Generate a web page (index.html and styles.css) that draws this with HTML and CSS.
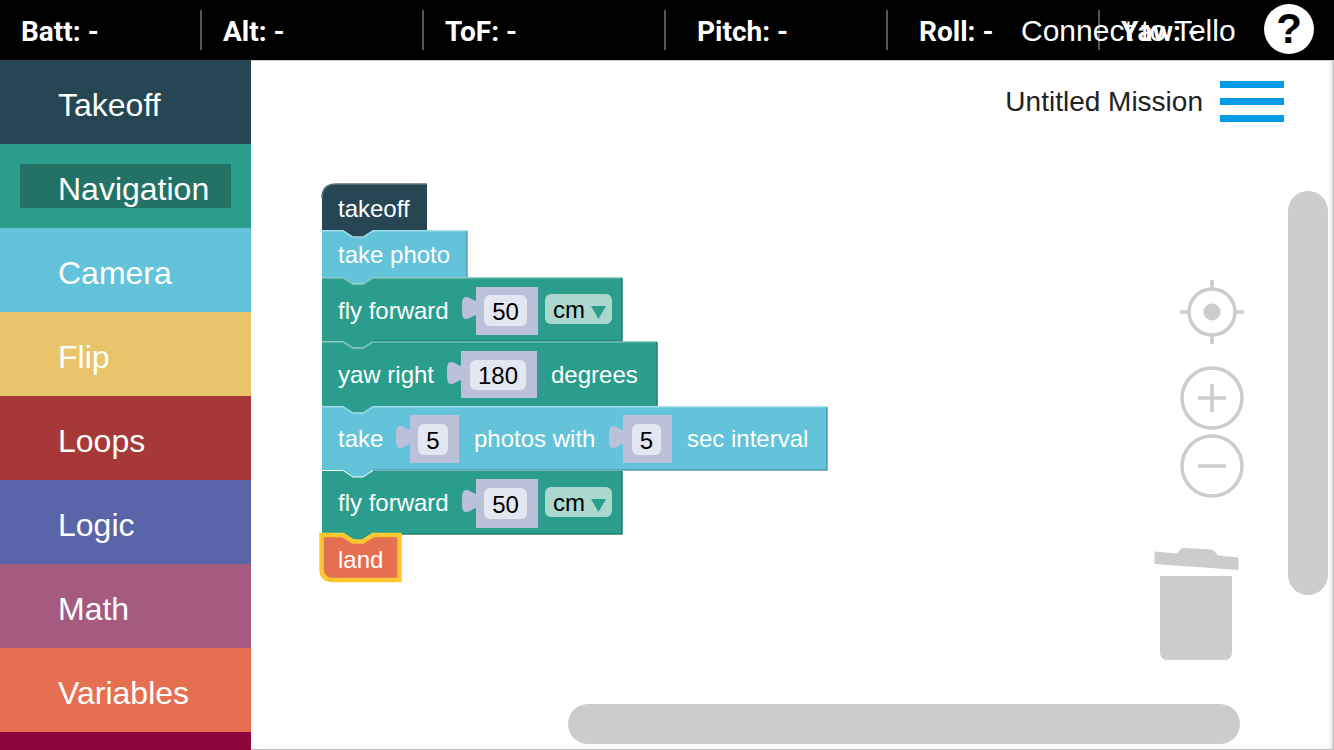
FILE: index.html
```html
<!DOCTYPE html>
<html lang="en">
<head>
    <meta charset="UTF-8">
    <meta name="viewport" content="width=device-width, initial-scale=1.0">
    <title>Untitled Mission</title>
    <link rel="stylesheet" href="styles.css">
</head>
<body>
    <header class="topbar">
        <div class="stat stat-batt">Batt: -</div>
        <div class="stat stat-alt">Alt: -</div>
        <div class="stat stat-tof">ToF: -</div>
        <div class="stat stat-pitch">Pitch: -</div>
        <div class="stat stat-roll">Roll: -</div>
        <div class="stat stat-yaw">Yaw: -</div>
        <div class="connect">Connect to Tello</div>
        <div class="help">?</div>
    </header>

    <div class="main">
        <nav class="toolbox">
            <div class="cat cat-takeoff"><span>Takeoff</span></div>
            <div class="cat cat-nav active"><span>Navigation</span></div>
            <div class="cat cat-camera"><span>Camera</span></div>
            <div class="cat cat-flip"><span>Flip</span></div>
            <div class="cat cat-loops"><span>Loops</span></div>
            <div class="cat cat-logic"><span>Logic</span></div>
            <div class="cat cat-math"><span>Math</span></div>
            <div class="cat cat-vars"><span>Variables</span></div>
            <div class="cat cat-more"></div>
        </nav>

        <section class="workspace">
            <!-- viewBox uses page coordinates so the blocks are easy to place -->
            <svg class="canvas" viewBox="251 61 1083 689" width="1083" height="689">
                <defs>
                    <path id="tab" d="M0 -7C-4 -8 -6 -11 -10 -11C-14 -11 -14 -6 -14 0C-14 6 -14 11 -10 11C-6 11 -4 8 0 7Z"/>
                </defs>

                <!-- takeoff -->
                <g class="block b-dark">
                    <path class="fill" d="M322 230V198Q322 184 336 184H427V230H373l-10 6.500h-10l-10 -6.500Z"/>
                    <path class="edge-hi" d="M322 198Q322 184 336 184H427"/>
                    <text x="338" y="217">takeoff</text>
                </g>

                <!-- take photo -->
                <g class="block b-blue">
                    <path class="fill" d="M322 231H343l10 6.500h10l10 -6.500H467V277H373l-10 6.500h-10l-10 -6.500H322Z"/>
                    <path class="edge-hi" d="M322 231H343l10 6.500h10l10 -6.500H467"/>
                    <path class="edge-lo" d="M467 231V277"/>
                    <text x="338" y="263">take photo</text>
                </g>

                <!-- fly forward -->
                <g class="block b-teal">
                    <path class="fill" d="M322 278H343l10 6.500h10l10 -6.500H622V341H373l-10 6.500h-10l-10 -6.500H322Z"/>
                    <path class="edge-hi" d="M322 278H343l10 6.500h10l10 -6.500H622"/>
                    <path class="edge-lo" d="M622 278V341H373"/>
                    <text x="338" y="319">fly forward</text>
                    <use class="lilac" href="#tab" x="476" y="308"/>
                    <rect class="lilac" x="476" y="287" width="62" height="48"/>
                    <rect class="field" x="484" y="295" width="43" height="31" rx="6"/>
                    <text class="val" x="505.500" y="320">50</text>
                    <rect class="drop" x="545" y="294" width="67" height="30" rx="6"/>
                    <text class="val-left" x="553" y="318">cm</text>
                    <path class="arrow" d="M591 306H606L598.500 319Z"/>
                </g>

                <!-- yaw right -->
                <g class="block b-teal">
                    <path class="fill" d="M322 342H343l10 6.500h10l10 -6.500H657V406H373l-10 6.500h-10l-10 -6.500H322Z"/>
                    <path class="edge-hi" d="M322 342H343l10 6.500h10l10 -6.500H657"/>
                    <path class="edge-lo" d="M657 342V406"/>
                    <text x="338" y="383">yaw right</text>
                    <use class="lilac" href="#tab" x="461" y="373"/>
                    <rect class="lilac" x="461" y="351" width="76" height="47"/>
                    <rect class="field" x="470" y="360" width="56" height="30" rx="6"/>
                    <text class="val" x="498" y="384">180</text>
                    <text x="551" y="383">degrees</text>
                </g>

                <!-- take n photos -->
                <g class="block b-blue">
                    <path class="fill" d="M322 407H343l10 6.500h10l10 -6.500H827V470H373l-10 6.500h-10l-10 -6.500H322Z"/>
                    <path class="edge-hi" d="M322 407H343l10 6.500h10l10 -6.500H827"/>
                    <path class="edge-lo" d="M827 407V470H373"/>
                    <text x="338" y="447">take</text>
                    <use class="lilac" href="#tab" x="410" y="437"/>
                    <rect class="lilac" x="410" y="415" width="49" height="48"/>
                    <rect class="field" x="418" y="424" width="30" height="31" rx="6"/>
                    <text class="val" x="433" y="449">5</text>
                    <text x="474" y="447">photos with</text>
                    <use class="lilac" href="#tab" x="623" y="437"/>
                    <rect class="lilac" x="623" y="415" width="49" height="48"/>
                    <rect class="field" x="632" y="424" width="29" height="31" rx="6"/>
                    <text class="val" x="646.500" y="449">5</text>
                    <text x="687" y="447">sec interval</text>
                </g>

                <!-- fly forward -->
                <g class="block b-teal">
                    <path class="fill" d="M322 471H343l10 6.500h10l10 -6.500H622V534H373l-10 6.500h-10l-10 -6.500H322Z"/>
                    <path class="edge-lo" d="M622 471V534H373"/>
                    <text x="338" y="511">fly forward</text>
                    <use class="lilac" href="#tab" x="476" y="501"/>
                    <rect class="lilac" x="476" y="479" width="62" height="49"/>
                    <rect class="field" x="484" y="488" width="43" height="31" rx="6"/>
                    <text class="val" x="505.500" y="513">50</text>
                    <rect class="drop" x="545" y="487" width="67" height="30" rx="6"/>
                    <text class="val-left" x="553" y="511">cm</text>
                    <path class="arrow" d="M591 499H606L598.500 512Z"/>
                </g>

                <!-- land, selected -->
                <g class="block b-orange">
                    <path class="fill selected" d="M321.500 535H343l10 6.500h10l10 -6.500H399.500V580H333Q321.500 580 321.500 568.500Z"/>
                    <text x="338" y="568">land</text>
                </g>

                <!-- zoom controls -->
                <g class="ctl">
                    <circle cx="1212" cy="312" r="23"/>
                    <path d="M1212 280V289M1212 335V344M1180 312H1189M1235 312H1244"/>
                    <circle class="ctl-fill" cx="1212" cy="312" r="8.500"/>
                    <circle cx="1212" cy="398" r="30"/>
                    <path d="M1198 398H1226M1212 384V412"/>
                    <circle cx="1212" cy="466" r="30"/>
                    <path d="M1198 466H1226"/>
                </g>

                <!-- trash -->
                <g class="ctl-fill">
                    <path d="M1154.500 551.500L1177 553.500L1181 549Q1182 548 1184 548L1211 549.500Q1213 549.500 1214 551L1218 555.500L1238.500 557.500V570L1154.500 564Z"/>
                    <path d="M1160 576H1232V652Q1232 660 1224 660H1168Q1160 660 1160 652Z"/>
                </g>

                <!-- scrollbars -->
                <rect class="ctl-fill" x="1288" y="191" width="40" height="404" rx="20"/>
                <rect class="ctl-fill" x="568" y="704" width="672" height="40" rx="20"/>
            </svg>

            <div class="mission">
                <span class="mission-name">Untitled Mission</span>
                <div class="burger"><i></i><i></i><i></i></div>
            </div>
        </section>
    </div>
</body>
</html>
```

FILE: styles.css
```css
html, body {
    margin: 0;
    height: 100%;
}

body {
    width: 1334px;
    height: 750px;
    overflow: hidden;
    background-color: #fff;
    font-family: "Liberation Sans", Arial, sans-serif;
    display: flex;
    flex-direction: column;
}

/* Top bar */
.topbar {
    position: relative;
    flex: 0 0 60px;
    height: 60px;
    background-color: #000;
    color: #fff;
    display: flex;
    align-items: center;
    box-sizing: border-box;
}

.stat {
    box-sizing: border-box;
    height: 40px;
    line-height: 44px;
    padding-left: 22px;
    border-right: 2px solid #555;
    font-family: Roboto, sans-serif;
    font-weight: 700;
    font-size: 28px;
    white-space: nowrap;
}

.stat-batt { width: 202px; padding-left: 21px; }
.stat-alt { width: 222px; padding-left: 21px; }
.stat-tof { width: 242px; padding-left: 21px; }
.stat-pitch { width: 222px; padding-left: 31px; }
.stat-roll { width: 212px; padding-left: 31px; }
.stat-yaw { border-right: 0; padding-left: 21px; }

.connect {
    position: absolute;
    left: 1021px;
    top: 13px;
    font-size: 30px;
    line-height: 36px;
    white-space: nowrap;
}

.help {
    position: absolute;
    left: 1264px;
    top: 4px;
    width: 50px;
    height: 50px;
    border-radius: 50%;
    background-color: #fff;
    color: #000;
    font-size: 42px;
    font-weight: 700;
    line-height: 50px;
    text-align: center;
}

/* Main area */
.main {
    flex: 1;
    display: flex;
    min-height: 0;
}

.toolbox {
    flex: 0 0 251px;
    overflow: hidden;
    color: #fff;
    font-size: 32px;
}

.cat {
    box-sizing: border-box;
    height: 84px;
    line-height: 90px;
    padding-left: 58px;
}

.cat.active {
    padding: 20px 20px 20px 20px;
    line-height: 50px;
}

.cat.active span {
    display: block;
    height: 44px;
    padding-left: 38px;
    background-color: #227366;
}

.cat-takeoff { background-color: #264653; }
.cat-nav { background-color: #2a9d8c; }
.cat-camera { background-color: #62c3da; }
.cat-flip { background-color: #e9c46a; }
.cat-loops { background-color: #a63938; }
.cat-logic { background-color: #5a64a8; }
.cat-math { background-color: #a55b80; }
.cat-vars { background-color: #e76f51; }
.cat-more { background-color: #8f063c; }

.workspace {
    position: relative;
    flex: 1;
    border-top: 1px solid #ccc;
    border-right: 1px solid #bbb;
    border-bottom: 1px solid #bbb;
    box-shadow: inset -4px 0 4px -3px #ccc;
}

.canvas {
    position: absolute;
    left: 0;
    top: 0;
}

.mission {
    position: relative;
    display: flex;
    justify-content: flex-end;
    align-items: center;
    gap: 17px;
    padding: 20px 49px 0 0;
}

.mission-name {
    font-size: 28px;
    color: #222;
}

.burger {
    width: 64px;
    display: flex;
    flex-direction: column;
    gap: 10px;
}

.burger i {
    display: block;
    height: 7px;
    background-color: #039be5;
}

/* Blocks */
.block text {
    font-family: "Liberation Sans", Arial, sans-serif;
    font-size: 24px;
    fill: #fff;
}

.block .val {
    fill: #000;
    text-anchor: middle;
}

.block .val-left {
    fill: #000;
}

.lilac {
    fill: #bcc1da;
}

.field {
    fill: #e4e6f1;
}

.drop {
    fill: #aad8cf;
}

.arrow {
    fill: #2a9d8c;
}

.edge-hi, .edge-lo {
    fill: none;
    stroke-width: 1.5;
}

.b-dark .fill { fill: #264653; }
.b-dark .edge-hi { stroke: #5c7680; }
.b-blue .fill { fill: #62c3da; }
.b-blue .edge-hi { stroke: #8ad4e5; }
.b-blue .edge-lo { stroke: #4e9cae; }
.b-teal .fill { fill: #2a9d8c; }
.b-teal .edge-hi { stroke: #6abaae; }
.b-teal .edge-lo { stroke: #227e70; }
.b-orange .fill { fill: #e76f51; }

.selected {
    stroke: #fdc731;
    stroke-width: 4.500;
}

.ctl {
    fill: none;
    stroke: #ccc;
    stroke-width: 3.500;
}

.ctl-fill {
    fill: #ccc;
    stroke: none;
}
```
